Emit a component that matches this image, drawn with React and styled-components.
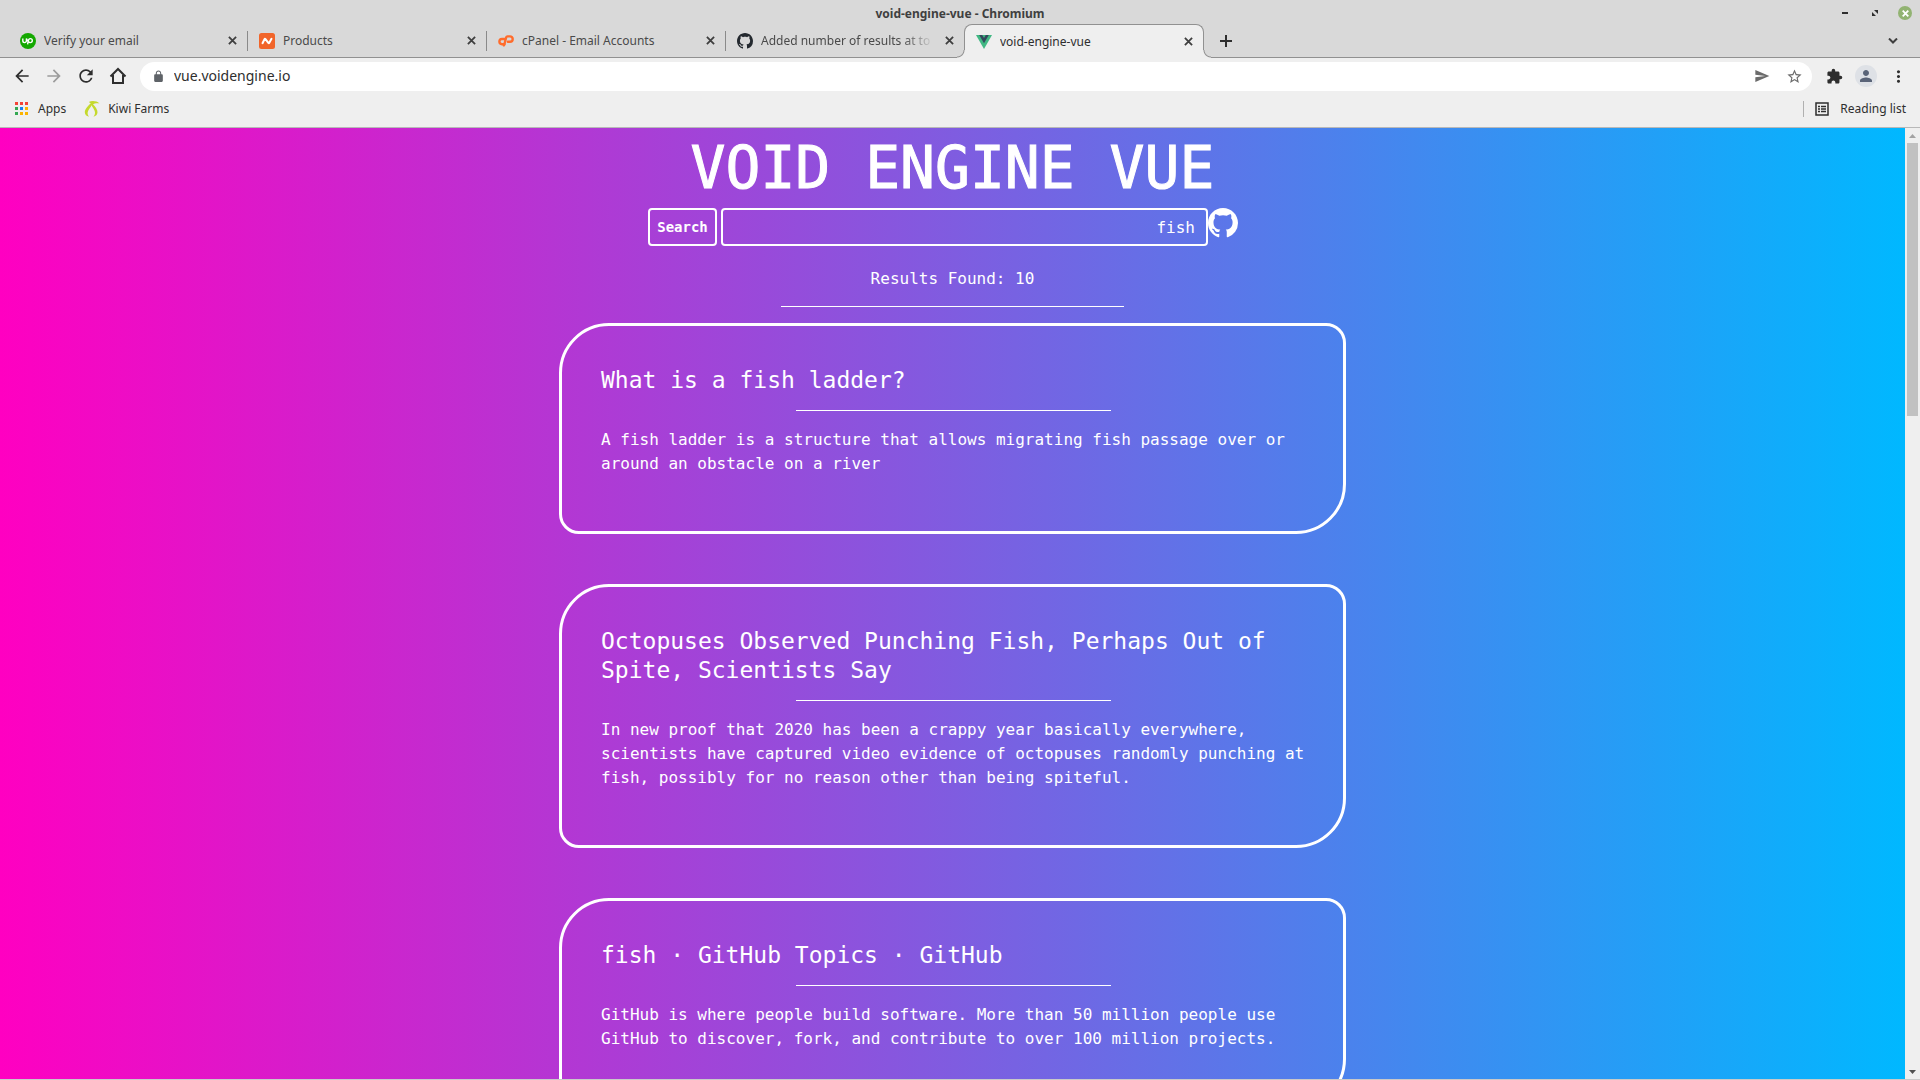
import React from 'react';
import styled, { createGlobalStyle } from 'styled-components';

const GlobalStyle = createGlobalStyle`
  *, *::before, *::after { box-sizing: border-box; }
  html, body { margin: 0; padding: 0; }
  body { overflow: hidden; background: #efefef; }
  button, input { margin: 0; font: inherit; color: inherit; }
`;

const uiFont = '"Noto Sans", "Open Sans", sans-serif';
const pixelFont = '"DejaVu Sans Mono", "Liberation Mono", monospace';

const Window = styled.div`
  display: flex;
  flex-direction: column;
  height: 100vh;
  font-family: ${uiFont};
  font-size: 12px;
  line-height: 20px;
  color: #2e2e2e;
`;

const Frame = styled.header`
  background: #d9d9d9;
  border-bottom: 1px solid #919191;
`;

const TitleBar = styled.div`
  display: grid;
  grid-template-columns: 1fr auto 1fr;
  height: 24px;
  padding: 0 8px;
  align-items: center;
`;

const WindowTitle = styled.div`
  grid-column: 2;
  font-weight: 700;
  line-height: 24px;
  padding-top: 2px;
  color: #3f3f3f;
`;

const WindowControls = styled.div`
  display: flex;
  justify-content: flex-end;
  gap: 16px;
`;

const IconButton = styled.button`
  display: flex;
  flex: none;
  align-items: center;
  justify-content: center;
  width: ${(p) => p.$size || 22}px;
  height: ${(p) => p.$size || 22}px;
  padding: 0;
  border: 0;
  border-radius: 50%;
  background: ${(p) => p.$bg || 'transparent'};
  color: ${(p) => p.$color || '#2e2e2e'};
`;

const TabStrip = styled.nav`
  display: flex;
  height: 33px;
  padding: 0 16px 0 8px;
`;

const Tab = styled.div`
  position: relative;
  display: flex;
  align-items: center;
  width: ${(p) => (p.$active ? 240 : 239)}px;
  margin-bottom: ${(p) => (p.$active ? -1 : 0)}px;
  padding: 0 8px 0 ${(p) => (p.$active ? 11 : 12)}px;
  gap: 8px;
  color: ${(p) => (p.$active ? '#2e2e2e' : '#4a4a4a')};
  ${(p) => p.$active && `
    background: #efefef;
    border: 1px solid #919191;
    border-bottom: 0;
    border-radius: 8px 8px 0 0;
    &::before, &::after {
      content: '';
      position: absolute;
      bottom: 0;
      width: 8px;
      height: 8px;
    }
    &::before {
      left: -8px;
      background: radial-gradient(circle at 0 0, #d9d9d9 6px, #919191 7px, #efefef 8px);
    }
    &::after {
      right: -8px;
      background: radial-gradient(circle at 100% 0, #d9d9d9 6px, #919191 7px, #efefef 8px);
    }
  `}
`;

const TabDivider = styled.span`
  position: absolute;
  right: -1px;
  top: 7px;
  width: 1px;
  height: 20px;
  background: #8a8a8a;
`;

const TabLink = styled.a`
  flex: 1;
  min-width: 0;
  padding-top: 1px;
  overflow: hidden;
  white-space: nowrap;
  color: inherit;
  text-decoration: none;
  ${(p) => p.$fade && 'mask-image: linear-gradient(to right, #000 82%, transparent);'}
`;

const TabStripSpacer = styled.div`
  flex: 1;
`;

const NewTab = styled(IconButton)`
  align-self: center;
  margin-left: 11px;
`;

const TabSearch = styled(IconButton)`
  align-self: center;
`;

const Toolbar = styled.div`
  display: flex;
  align-items: center;
  gap: 10px;
  height: 36px;
  padding: 0 11px;
  background: #efefef;
`;

const Omnibox = styled.div`
  display: flex;
  flex: 1;
  align-items: center;
  height: 29px;
  margin: 0 1px;
  padding: 0 7px 0 10px;
  border-radius: 15px;
  background: #fff;
`;

const UrlInput = styled.input`
  flex: 1;
  min-width: 0;
  padding: 0 0 0 8px;
  border: 0;
  outline: 0;
  background: transparent;
  font-size: 14px;
`;

const OmniboxActions = styled.div`
  display: flex;
  gap: 10px;
`;

const Bookmarks = styled.nav`
  display: flex;
  align-items: center;
  height: 34px;
  padding: 0 14px 3px 14px;
  gap: 18px;
  background: #efefef;
  border-bottom: 1px solid #b8b8b8;
`;

const Bookmark = styled.a`
  display: flex;
  align-items: center;
  gap: 8px;
  color: inherit;
  text-decoration: none;
`;

const ReadingList = styled(Bookmark)`
  gap: 10px;
  margin-left: auto;
`;

const ReadingDivider = styled.span`
  width: 1px;
  height: 16px;
  background: #b0b0b0;
`;

const Viewport = styled.div`
  display: flex;
  flex: 1;
  min-height: 0;
  border-bottom: 1px solid #c9c9c9;
`;

const Page = styled.main`
  flex: 1;
  min-width: 0;
  overflow: hidden;
  padding-top: 6px;
  background: linear-gradient(to right, #ff00c1, #00b8ff);
  color: #fff;
  font-family: ${pixelFont};
  font-size: 16px;
  line-height: 24px;
`;

const Heading = styled.h1`
  margin: 0 0 6px;
  font-size: 58px;
  font-weight: 400;
  line-height: 68px;
  text-align: center;
  -webkit-text-stroke: 1px #fff;
`;

const SearchForm = styled.form`
  display: flex;
  justify-content: center;
  gap: 4px;
  padding-right: 19px;
`;

const SearchButton = styled.button`
  width: 69px;
  height: 38px;
  padding: 0;
  border: 2px solid #fff;
  border-radius: 4px;
  background: transparent;
  font-size: 14px;
  font-weight: 700;
`;

const SearchGroup = styled.div`
  display: flex;
`;

const SearchInput = styled.input`
  width: 487px;
  height: 38px;
  padding: 0 11px;
  border: 2px solid #fff;
  border-radius: 4px;
  outline: 0;
  background: transparent;
  text-align: right;
`;

const RepoLink = styled.a`
  display: block;
  height: 30px;
  color: #fff;
`;

const ResultCount = styled.p`
  margin: 21px 0 15px;
  text-align: center;
`;

const Rule = styled.hr`
  width: ${(p) => p.$width};
  height: 1px;
  margin: 0 auto;
  border: 0;
  background: #fff;
`;

const Results = styled.div`
  display: flex;
  flex-direction: column;
  align-items: center;
  gap: 50px;
  padding-top: 16px;
`;

const Card = styled.article`
  width: 90%;
  max-width: 787px;
  padding: 40px 38px 55px 39px;
  border: 3px solid #fff;
  border-radius: 50px 20px;
`;

const CardTitle = styled.h2`
  margin: 0 0 15px;
  font-size: 23px;
  font-weight: 400;
  line-height: 29px;
`;

const CardText = styled.p`
  margin: 17px 0 0;
`;

const Scrollbar = styled.div`
  display: flex;
  flex-direction: column;
  align-items: center;
  width: 15px;
  background: #efefef;
`;

const ScrollArrow = styled.div`
  display: flex;
  align-items: center;
  justify-content: center;
  height: 15px;
`;

const ScrollTrack = styled.div`
  flex: 1;
  width: 11px;
`;

const ScrollThumb = styled.div`
  height: 273px;
  background: #c1c1c1;
`;

const paths = {
  back: 'M20 11H7.83l5.59-5.59L12 4l-8 8 8 8 1.41-1.41L7.83 13H20v-2z',
  forward: 'M12 4l-1.41 1.41L16.17 11H4v2h12.17l-5.58 5.59L12 20l8-8z',
  reload:
    'M17.65 6.35A7.958 7.958 0 0012 4c-4.42 0-7.99 3.58-7.99 8s3.57 8 7.99 8c3.73 0 6.84-2.55 7.73-6h-2.08A5.99 5.99 0 0112 18c-3.31 0-6-2.69-6-6s2.69-6 6-6c1.66 0 3.14.69 4.22 1.78L13 11h7V4l-2.35 2.35z',
  lock: 'M18 8h-1V6c0-2.76-2.24-5-5-5S7 3.24 7 6v2H6c-1.1 0-2 .9-2 2v10c0 1.1.9 2 2 2h12c1.1 0 2-.9 2-2V10c0-1.1-.9-2-2-2zM8.9 8V6c0-1.71 1.39-3.1 3.1-3.1s3.1 1.39 3.1 3.1v2z',
  send: 'M2.01 21L23 12 2.01 3 2 10l15 2-15 2z',
  star: 'M22 9.24l-7.19-.62L12 2 9.19 8.63 2 9.24l5.46 4.73L5.82 21 12 17.27 18.18 21l-1.63-7.03L22 9.24zM12 15.4l-3.76 2.27 1-4.28-3.32-2.88 4.38-.38L12 6.1l1.71 4.04 4.38.38-3.32 2.88 1 4.28L12 15.4z',
  extension:
    'M20.5 11H19V7c0-1.1-.9-2-2-2h-4V3.5a2.5 2.5 0 00-5 0V5H4c-1.1 0-1.99.9-1.99 2v3.8H3.5c1.49 0 2.7 1.21 2.7 2.7s-1.21 2.7-2.7 2.7H2V20c0 1.1.9 2 2 2h3.8v-1.5c0-1.49 1.21-2.7 2.7-2.7s2.7 1.21 2.7 2.7V22H17c1.1 0 2-.9 2-2v-4h1.5a2.5 2.5 0 000-5z',
  person:
    'M12 12c2.21 0 4-1.79 4-4s-1.79-4-4-4-4 1.79-4 4 1.79 4 4 4zm0 2c-2.67 0-8 1.34-8 4v2h16v-2c0-2.66-5.33-4-8-4z',
  more: 'M12 8c1.1 0 2-.9 2-2s-.9-2-2-2-2 .9-2 2 .9 2 2 2zm0 2c-1.1 0-2 .9-2 2s.9 2 2 2 2-.9 2-2-.9-2-2-2zm0 6c-1.1 0-2 .9-2 2s.9 2 2 2 2-.9 2-2-.9-2-2-2z',
};

const Glyph = ({ name, size = 20 }) => (
  <svg width={size} height={size} viewBox="0 0 24 24" fill="currentColor" aria-hidden="true">
    <path d={paths[name]} />
  </svg>
);

const GithubMark = ({ size, color = 'currentColor' }) => (
  <svg width={size} height={size} viewBox="0 0 16 16" fill={color} aria-hidden="true">
    <path d="M8 0C3.58 0 0 3.58 0 8c0 3.54 2.29 6.53 5.47 7.59.4.07.55-.17.55-.38 0-.19-.01-.82-.01-1.49-2.01.37-2.53-.49-2.69-.94-.09-.23-.48-.94-.82-1.13-.28-.15-.68-.52-.01-.53.63-.01 1.08.58 1.23.82.72 1.21 1.87.87 2.33.66.07-.52.28-.87.51-1.07-1.78-.2-3.64-.89-3.64-3.95 0-.87.31-1.59.82-2.15-.08-.2-.36-1.02.08-2.12 0 0 .67-.21 2.2.82.64-.18 1.32-.27 2-.27.68 0 1.36.09 2 .27 1.53-1.04 2.2-.82 2.2-.82.44 1.1.16 1.92.08 2.12.51.56.82 1.27.82 2.15 0 3.07-1.87 3.75-3.65 3.95.29.25.54.73.54 1.48 0 1.07-.01 1.93-.01 2.2 0 .21.15.46.55.38A8.013 8.013 0 0016 8c0-4.42-3.58-8-8-8z" />
  </svg>
);

const UpworkIcon = () => (
  <svg width="16" height="16" viewBox="0 0 16 16" aria-hidden="true">
    <circle cx="8" cy="8" r="8" fill="#14a800" />
    <path d="M2.8 5.6v2.2a1.8 1.8 0 003.6 0V5.6c.8 2 1.9 4 3.9 4a2 2 0 100-4c-1.500 0-1.900 1.200-2.100 2.400L7.600 11.400" fill="none" stroke="#fff" strokeWidth="1.4" />
  </svg>
);

const NamecheapIcon = () => (
  <svg width="16" height="16" viewBox="0 0 16 16" aria-hidden="true">
    <rect width="16" height="16" rx="2.500" fill="#f1652a" />
    <path d="M3.500 10.200L5.500 6.200q.4-.7 1 0L9.300 9.800q.6.700 1 0L12.500 5.800" fill="none" stroke="#fff" strokeWidth="2" strokeLinecap="round" />
  </svg>
);

const CpanelIcon = () => (
  <svg width="16" height="16" viewBox="0 0 16 16" fill="none" stroke="#ff6c2c" strokeWidth="2.400" strokeLinecap="round" strokeLinejoin="round" aria-hidden="true">
    <path d="M6.200 6H4a2.600 2.600 0 000 5.200h2.400L8.200 4.300Q8.500 3.400 9.500 3.400H12a2.700 2.700 0 010 5.400H9.900" />
    <path d="M6.400 11.200L5.900 12.400" />
  </svg>
);

const VueIcon = () => (
  <svg width="16" height="16" viewBox="0 0 16 16" aria-hidden="true">
    <path d="M0 1h16L8 15z" fill="#41b883" />
    <path d="M3.200 1h3L8 4l1.800-3h3L8 9.300z" fill="#35495e" />
  </svg>
);

const CloseIcon = ({ size = 9, width = 2 }) => (
  <svg width={size} height={size} viewBox="0 0 10 10" stroke="currentColor" strokeWidth={width} aria-hidden="true">
    <path d="M1 1l8 8M9 1l-8 8" />
  </svg>
);

const AppsIcon = () => {
  const colors = ['#f44336', '#f44336', '#f44336', '#34a853', '#1a80f0', '#fbb300', '#34a853', '#fbb300', '#fbb300'];
  return (
    <svg width="16" height="16" viewBox="0 0 16 16" aria-hidden="true">
      {colors.map((c, i) => (
        <rect key={i} x={1 + (i % 3) * 5} y={1 + Math.floor(i / 3) * 5} width="3" height="3" fill={c} />
      ))}
    </svg>
  );
};

const KiwiIcon = () => (
  <svg width="16" height="16" viewBox="0 0 16 16" aria-hidden="true">
    <path d="M7.500 1.500C4.500 4.500.8 7.800.8 11.300.8 13.600 2.500 15.300 5 15.700 3.500 14 3.200 12 4.200 9.800 5 8 6.800 6 7.600 4.200 8.400 6 10 8 10.600 9.800c.8 2.200.4 4.200-1.100 5.900 2.400-.5 4-2.100 4-4.400C13.500 8.500 11.500 6 9.200 3.600z" fill="#c5d92d" />
    <path d="M4.800 1C7.500-.4 12.500-.3 15.500 2.400 13 1.900 10.500 2.200 8.500 3.700z" fill="#c5d92d" />
  </svg>
);

const tabs = [
  { label: 'Verify your email', Icon: UpworkIcon, divider: true },
  { label: 'Products', Icon: NamecheapIcon, divider: true },
  { label: 'cPanel - Email Accounts', Icon: CpanelIcon, divider: true },
  { label: 'Added number of results at to', Icon: () => <GithubMark size={16} color="#24292f" />, fade: true },
  { label: 'void-engine-vue', Icon: VueIcon, active: true },
];

const results = [
  {
    title: 'What is a fish ladder?',
    text: 'A fish ladder is a structure that allows migrating fish passage over or around an obstacle on a river',
  },
  {
    title: 'Octopuses Observed Punching Fish, Perhaps Out of Spite, Scientists Say',
    text: 'In new proof that 2020 has been a crappy year basically everywhere, scientists have captured video evidence of octopuses randomly punching at fish, possibly for no reason other than being spiteful.',
  },
  {
    title: 'fish · GitHub Topics · GitHub',
    text: 'GitHub is where people build software. More than 50 million people use GitHub to discover, fork, and contribute to over 100 million projects.',
  },
];

export default function App() {
  return (
    <Window>
      <GlobalStyle />
      <Frame>
        <TitleBar>
          <WindowTitle>void-engine-vue - Chromium</WindowTitle>
          <WindowControls>
            <IconButton $size={14} aria-label="Minimize">
              <svg width="14" height="14" aria-hidden="true"><rect x="4" y="6" width="6" height="2" fill="#2e2e2e" /></svg>
            </IconButton>
            <IconButton $size={14} aria-label="Restore">
              <svg width="14" height="14" fill="#2e2e2e" aria-hidden="true"><path d="M6 4h4v4zM4 6v4h4z" /></svg>
            </IconButton>
            <IconButton $size={14} $bg="#92b372" $color="#fff" aria-label="Close window">
              <CloseIcon size={7} width={2.6} />
            </IconButton>
          </WindowControls>
        </TitleBar>
        <TabStrip aria-label="Tabs">
          {tabs.map(({ label, Icon, active, divider, fade }) => (
            <Tab key={label} $active={active}>
              <Icon />
              <TabLink href="#" $fade={fade}>{label}</TabLink>
              <IconButton $size={14} $color="#3f3f3f" aria-label={`Close ${label}`}>
                <CloseIcon />
              </IconButton>
              {divider && <TabDivider />}
            </Tab>
          ))}
          <NewTab aria-label="New tab">
            <svg width="12" height="12" stroke="#2e2e2e" strokeWidth="2" aria-hidden="true"><path d="M6 0v12M0 6h12" /></svg>
          </NewTab>
          <TabStripSpacer />
          <TabSearch aria-label="Search tabs">
            <svg width="10" height="6" fill="none" stroke="#3f3f3f" strokeWidth="2" aria-hidden="true"><path d="M1 0.500l4 4 4-4" /></svg>
          </TabSearch>
        </TabStrip>
      </Frame>
      <Toolbar>
        <IconButton aria-label="Back"><Glyph name="back" /></IconButton>
        <IconButton $color="#9c9c9c" aria-label="Forward"><Glyph name="forward" /></IconButton>
        <IconButton aria-label="Reload"><Glyph name="reload" /></IconButton>
        <IconButton aria-label="Home">
          <svg width="18" height="18" viewBox="0 0 18 18" fill="none" stroke="currentColor" strokeWidth="2" aria-hidden="true">
            <path d="M1.500 9.500L9 2l7.500 7.500M4 8v8h10V8" />
          </svg>
        </IconButton>
        <Omnibox>
          <IconButton $size={16} $color="#5f6368" aria-label="View site information"><Glyph name="lock" size={13} /></IconButton>
          <UrlInput aria-label="Address" defaultValue="vue.voidengine.io" />
          <OmniboxActions>
            <IconButton $color="#6b6b6b" aria-label="Share this page"><Glyph name="send" size={16} /></IconButton>
            <IconButton $color="#6b6b6b" aria-label="Bookmark this page"><Glyph name="star" size={17} /></IconButton>
          </OmniboxActions>
        </Omnibox>
        <IconButton aria-label="Extensions"><Glyph name="extension" size={17} /></IconButton>
        <IconButton $bg="#dee1e6" $color="#5a6478" aria-label="Profile"><Glyph name="person" size={18} /></IconButton>
        <IconButton aria-label="Menu"><Glyph name="more" size={19} /></IconButton>
      </Toolbar>
      <Bookmarks aria-label="Bookmarks">
        <Bookmark href="#"><AppsIcon />Apps</Bookmark>
        <Bookmark href="#"><KiwiIcon />Kiwi Farms</Bookmark>
        <ReadingList href="#">
          <ReadingDivider />
          <svg width="16" height="16" viewBox="0 0 16 16" aria-hidden="true">
            <rect x="2" y="2" width="12" height="12" fill="none" stroke="#2e2e2e" strokeWidth="1.500" />
            <path d="M4 5.500h2M7 5.500h5M4 8h2M7 8h5M4 10.500h2M7 10.500h5" stroke="#2e2e2e" strokeWidth="1.300" />
          </svg>
          Reading list
        </ReadingList>
      </Bookmarks>
      <Viewport>
        <Page>
          <Heading>VOID ENGINE VUE</Heading>
          <SearchForm onSubmit={(e) => e.preventDefault()}>
            <SearchButton type="submit">Search</SearchButton>
            <SearchGroup>
              <SearchInput aria-label="Search query" defaultValue="fish" />
              <RepoLink href="#" aria-label="GitHub repository"><GithubMark size={30} /></RepoLink>
            </SearchGroup>
          </SearchForm>
          <ResultCount>Results Found: 10</ResultCount>
          <Rule $width="18%" />
          <Results>
            {results.map((r) => (
              <Card key={r.title}>
                <CardTitle>{r.title}</CardTitle>
                <Rule $width="315px" />
                <CardText>{r.text}</CardText>
              </Card>
            ))}
          </Results>
        </Page>
        <Scrollbar aria-hidden="true">
          <ScrollArrow><svg width="7" height="4" fill="#a3a3a3"><path d="M0 4L3.500 0 7 4z" /></svg></ScrollArrow>
          <ScrollTrack><ScrollThumb /></ScrollTrack>
          <ScrollArrow><svg width="7" height="4" fill="#505050"><path d="M0 0h7L3.500 4z" /></svg></ScrollArrow>
        </Scrollbar>
      </Viewport>
    </Window>
  );
}
